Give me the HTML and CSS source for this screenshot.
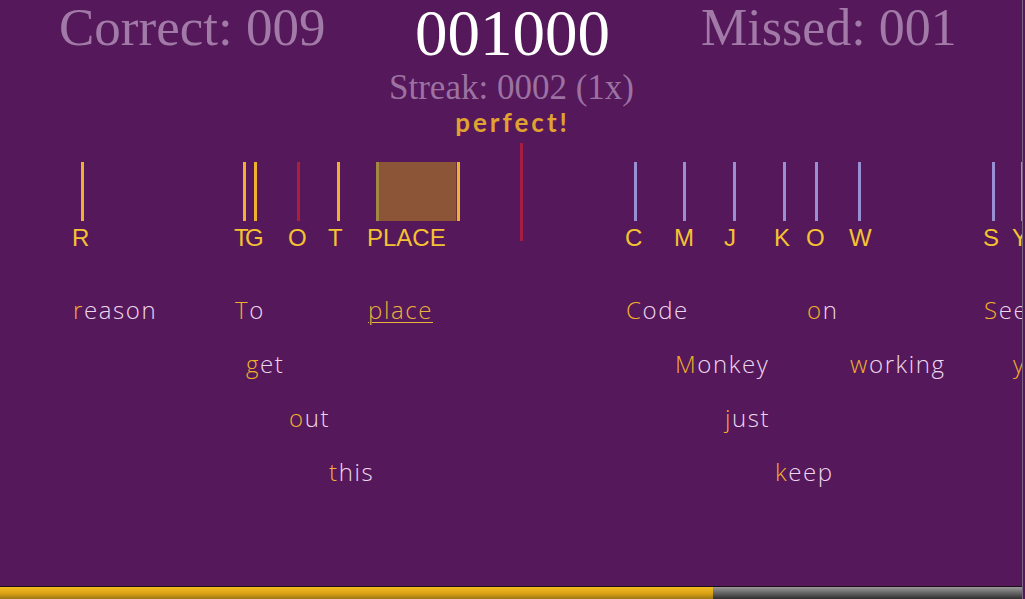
FILE: index.html
```html
<!DOCTYPE html>
<html>
<head>
<meta charset="utf-8">
<link rel="stylesheet" href="styles.css">
</head>
<body>
<div class="game">
  <div class="header">
    <div class="stat stat-correct">Correct: 009</div>
    <div class="score">001000</div>
    <div class="stat stat-missed">Missed: 001</div>
  </div>
  <div class="streak">Streak: 0002 (1x)</div>
  <div class="judge">perfect!</div>
  <div class="track">
    <div class="hitline"></div>

    <div class="note" style="left:73px;--row:0"><div class="line hit"></div><div class="label">R</div><div class="word"><span class="first">r</span>eason</div></div>
    <div class="note" style="left:235px;--row:0"><div class="line hit"></div><div class="label">T</div><div class="word"><span class="first">T</span>o</div></div>
    <div class="note" style="left:246px;--row:1"><div class="line hit"></div><div class="label">G</div><div class="word"><span class="first">g</span>et</div></div>
    <div class="note" style="left:289px;--row:2"><div class="line miss"></div><div class="label">O</div><div class="word"><span class="first">o</span>ut</div></div>
    <div class="note" style="left:329px;--row:3"><div class="line hit"></div><div class="label">T</div><div class="word"><span class="first">t</span>his</div></div>
    <div class="note" style="left:368px;--row:0"><div class="hold"><div class="hold-box"></div><div class="hold-edge"></div><div class="hold-end"></div></div><div class="label">PLACE</div><div class="word active">place</div></div>

    <div class="note" style="left:626px;--row:0"><div class="line todo"></div><div class="label">C</div><div class="word"><span class="first">C</span>ode</div></div>
    <div class="note" style="left:675px;--row:1"><div class="line todo"></div><div class="label">M</div><div class="word"><span class="first">M</span>onkey</div></div>
    <div class="note" style="left:725px;--row:2"><div class="line todo"></div><div class="label">J</div><div class="word"><span class="first">j</span>ust</div></div>
    <div class="note" style="left:775px;--row:3"><div class="line todo"></div><div class="label">K</div><div class="word"><span class="first">k</span>eep</div></div>
    <div class="note" style="left:807px;--row:0"><div class="line todo"></div><div class="label">O</div><div class="word"><span class="first">o</span>n</div></div>
    <div class="note" style="left:850px;--row:1"><div class="line todo"></div><div class="label">W</div><div class="word"><span class="first">w</span>orking</div></div>
    <div class="note" style="left:984px;--row:0"><div class="line todo"></div><div class="label">S</div><div class="word"><span class="first">S</span>ee</div></div>
    <div class="note" style="left:1013px;--row:1"><div class="line todo"></div><div class="label">Y</div><div class="word"><span class="first">y</span>ou</div></div>
  </div>
  <div class="progress"><div class="progress-fill" style="width:713px"></div></div>
</div>
</body>
</html>
```

FILE: styles.css
```css
html, body {
  margin: 0;
  padding: 0;
  background: #55185a;
  overflow: hidden;
}

.game {
  width: 1022px;
  height: 599px;
  overflow: hidden;
  display: flex;
  flex-direction: column;
  background: #55185a;
  border-right: 1px solid #7a6480;
}

.header {
  display: grid;
  grid-template-columns: 303px 301px 1fr;
  padding-left: 59px;
  align-items: start;
  font-family: "Liberation Serif", "Times New Roman", serif;
}

.stat {
  font-size: 53px;
  line-height: 61px;
  margin-top: -3px;
  color: #a27aa8;
  white-space: nowrap;
}

.stat-missed {
  padding-left: 38px;
  font-size: 52px;
}

.score {
  font-size: 65px;
  line-height: 75px;
  margin-top: -4px;
  color: #ffffff;
  text-align: center;
}

.streak {
  margin-top: -3px;
  font-family: "Liberation Serif", "Times New Roman", serif;
  font-size: 35px;
  line-height: 40px;
  color: #9b72a2;
  text-align: center;
  padding-left: 1px;
}

.judge {
  margin-top: -1px;
  font-family: Lato, "Noto Sans", sans-serif;
  font-weight: 700;
  font-size: 26px;
  line-height: 30px;
  letter-spacing: 3px;
  color: #e0a231;
  text-align: center;
  padding-left: 3px;
}

.track {
  position: relative;
  flex: 1;
  margin-top: -2px;
}

.hitline {
  position: absolute;
  left: 520px;
  top: 8px;
  width: 3px;
  height: 98px;
  background: #a51c45;
}

.note {
  position: absolute;
  top: 0;
  display: flex;
  flex-direction: column;
  align-items: flex-start;
}

.line {
  width: 3px;
  height: 59px;
  margin: 27px 0 0 8px;
}

.line.hit { background: #f0b12e; }
.line.miss { background: #ae1f36; }
.line.todo { background: #9890d2; }

.hold {
  display: flex;
  height: 59px;
  margin: 27px 0 0 8px;
}

.hold-box {
  width: 77px;
  background: #8d5537;
  border-left: 3px solid #a08a42;
}

.hold-edge {
  width: 1px;
  background: #6a2f3c;
}

.hold-end {
  width: 3px;
  background: #f0b12e;
}

.label {
  margin-top: 3px;
  margin-left: -1px;
  font-family: "Liberation Sans", Arial, sans-serif;
  font-size: 24px;
  line-height: 28px;
  color: #f4c233;
  white-space: nowrap;
}

.word {
  margin-top: calc(41px + var(--row) * 54px);
  font-family: "Open Sans", sans-serif;
  font-weight: 300;
  font-size: 24px;
  line-height: 33px;
  letter-spacing: 1.6px;
  color: #eed6ee;
  white-space: nowrap;
}

.word .first {
  color: #f0b02c;
}

.word.active {
  color: #eab33c;
  text-decoration: underline;
  text-decoration-thickness: 1px;
  text-underline-offset: 3px;
}

.progress {
  height: 12px;
  border-top: 1px solid #1c0c18;
  background: linear-gradient(#9a9a9a, #5a5a5a 60%, #2e2e2e);
  flex-shrink: 0;
}

.progress-fill {
  height: 100%;
  background: linear-gradient(#f2bc22, #d9a014 55%, #9a7612);
}
```
